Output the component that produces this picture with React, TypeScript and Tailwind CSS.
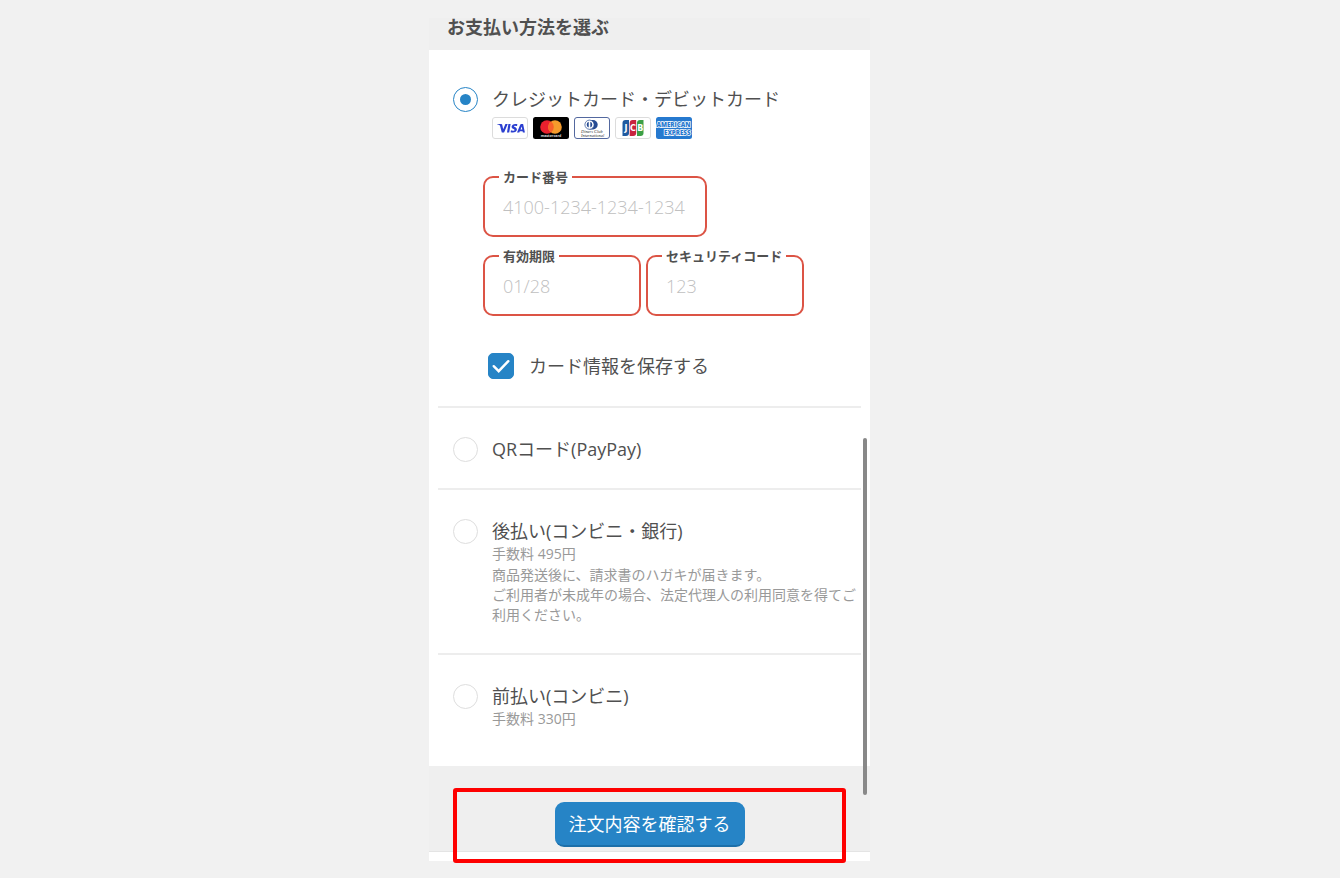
import { useState, type ReactNode } from "react";

const LOGO = "h-[22px] w-9 shrink-0";

function Visa() {
  return (
    <svg viewBox="0 0 36 22" className={LOGO} role="img" aria-label="Visa">
      <rect x="0.5" y="0.5" width="35" height="21" rx="2.5" fill="#fff" stroke="#dcdcdc" />
      <g fill="#2b3fd0">
        <path d="M5 7h4.2c.6 0 1 .3 1.1.9l.9 4.3 2.2-5.2h2.3l-3.6 8.6H9.8l-1.8-6.8C7.9 8.1 6.500 7.500 5 7.200z" />
        <path d="M16.4 7h2.2l-1.4 8.600H15z" />
        <path d="M25.4 7.300l-.4 1.800c-.8-.4-3-.8-3 .2 0 .9 2.900 1 2.900 3.200 0 2.500-3.300 3.700-6.300 2.700l.4-1.900c1.200.6 3.500.7 3.500-.4 0-1-2.900-.9-2.900-3.100 0-2.500 3.200-3.500 5.800-2.500z" />
        <path fillRule="evenodd" d="M29.200 7h1.900l1.800 8.600h-2l-.3-1.300h-2.800l-.5 1.300H25l3.200-7.900c.2-.4.5-.7 1-.7zm.5 2.600l-1.200 3h1.800z" />
      </g>
    </svg>
  );
}

function Mastercard() {
  return (
    <svg viewBox="0 0 36 22" className={LOGO} role="img" aria-label="Mastercard">
      <rect width="36" height="22" rx="2.5" fill="#000" />
      <circle cx="14" cy="10" r="6.8" fill="#e9202e" />
      <circle cx="22" cy="10" r="6.8" fill="#f59b2c" />
      <path d="M18 4.500a6.800 6.800 0 0 1 0 11a6.800 6.800 0 0 1 0-11z" fill="#f8602a" />
      <text x="18" y="20" textAnchor="middle" fontSize="3.6" fontWeight="700" fill="#ddd">
        mastercard
      </text>
    </svg>
  );
}

function Diners() {
  return (
    <svg viewBox="0 0 36 22" className={LOGO} role="img" aria-label="Diners Club">
      <rect x="0.5" y="0.5" width="35" height="21" rx="2.5" fill="#fff" stroke="#53689f" />
      <path d="M15.5 3H19a4.700 4.700 0 0 1 0 9.400h-3.500z" fill="#254a92" />
      <circle cx="15.5" cy="7.700" r="4.600" fill="#fff" stroke="#254a92" strokeWidth="0.700" />
      <path d="M14.700 4.800v5.800a3.100 3.100 0 0 1 0-5.800zM16.300 4.800v5.800a3.100 3.100 0 0 0 0-5.800z" fill="#254a92" />
      <g fontFamily="Liberation Serif, serif" fontStyle="italic" fontSize="4.400" fill="#333">
        <text x="7" y="16.300">Diners Club</text>
        <text x="7" y="19.800">International</text>
      </g>
    </svg>
  );
}

function Jcb() {
  return (
    <svg viewBox="0 0 36 22" className={LOGO} role="img" aria-label="JCB">
      <rect x="0.5" y="0.5" width="35" height="21" rx="2.5" fill="#fff" stroke="#dcdcdc" />
      <path d="M10.500 3H14v13a3 3 0 0 1-3 3H7.500V6a3 3 0 0 1 3-3z" fill="#1f5a9f" />
      <path d="M17.700 3h3.500v13a3 3 0 0 1-3 3h-3.500V6a3 3 0 0 1 3-3z" fill="#c9243f" />
      <path d="M25 3h3.500v13a3 3 0 0 1-3 3H22V6a3 3 0 0 1 3-3z" fill="#3c9f45" />
      <g fontFamily="DejaVu Sans, sans-serif" fontSize="8" fontWeight="700" fill="#fff" textAnchor="middle">
        <text x="11" y="14">J</text>
        <text x="18" y="14">C</text>
        <text x="25.200" y="14">B</text>
      </g>
    </svg>
  );
}

function Amex() {
  return (
    <svg viewBox="0 0 36 22" className={LOGO} role="img" aria-label="American Express">
      <rect width="36" height="22" rx="2.5" fill="#2679cf" />
      <g fontSize="6.200" fontWeight="800" fill="#2679cf" stroke="#fff" strokeWidth="1.400" paintOrder="stroke">
        <text x="0.500" y="10">AMERICAN</text>
        <text x="8" y="17.500">EXPRESS</text>
      </g>
    </svg>
  );
}

interface FieldProps {
  id: string;
  label: string;
  placeholder: string;
  className: string;
}

function Field({ id, label, placeholder, className }: FieldProps) {
  return (
    <fieldset className={`min-w-0 rounded-[10px] border-2 border-[#dc5445] px-3.5 pb-2 ${className}`}>
      <legend className="h-5 px-1 text-[13px] leading-5 font-bold">
        <label htmlFor={id}>{label}</label>
      </legend>
      <input
        id={id}
        type="text"
        inputMode="numeric"
        placeholder={placeholder}
        className="block h-10 w-full bg-transparent pl-1 text-lg font-light outline-none placeholder:text-[#c0c0c0]"
      />
    </fieldset>
  );
}

interface OptionProps {
  id: string;
  title: string;
  selected: string;
  onSelect: (id: string) => void;
  className: string;
  children?: ReactNode;
}

function Option({ id, title, selected, onSelect, className, children }: OptionProps) {
  return (
    <div className={`pr-1 pl-[15px] ${className}`}>
      <div className="flex items-center gap-3.5">
        <input
          id={id}
          type="radio"
          name="payment"
          checked={selected === id}
          onChange={() => onSelect(id)}
          className="grid size-[25px] shrink-0 appearance-none place-items-center rounded-full border border-[#dedede] bg-white checked:border-[#2684c6] checked:before:size-[11px] checked:before:rounded-full checked:before:bg-[#2684c6] checked:before:content-['']"
        />
        <label htmlFor={id} className="text-lg leading-[26px]">
          {title}
        </label>
      </div>
      {children}
    </div>
  );
}

export default function App() {
  const [selected, setSelected] = useState("credit");
  const [save, setSave] = useState(true);

  return (
    <div className="min-h-screen bg-[#f1f1f1] pr-[41px] font-['Open_Sans','Noto_Sans_CJK_JP',sans-serif] text-[#505050]">
      <main className="relative mx-auto max-w-[441px] pt-[18px]">
        <h1 className="bg-[#efefef] pb-3.5 pl-[18px] text-lg leading-[18px] font-bold">
          お支払い方法を選ぶ
        </h1>

        <form onSubmit={(e) => e.preventDefault()}>
          <div className="divide-y-2 divide-[#ededed] bg-white px-[9px]">
            <Option
              id="credit"
              title="クレジットカード・デビットカード"
              selected={selected}
              onSelect={setSelected}
              className="pt-9 pb-[27px]"
            >
              <div className="mt-[5px] flex gap-[5px] pl-[39px]">
                <Visa />
                <Mastercard />
                <Diners />
                <Jcb />
                <Amex />
              </div>
              <div className="mt-7 pl-[30px]">
                <Field id="number" label="カード番号" placeholder="4100-1234-1234-1234" className="max-w-[224px]" />
                <div className="mt-[9px] flex gap-[5px]">
                  <Field id="expiry" label="有効期限" placeholder="01/28" className="w-[158px]" />
                  <Field id="cvc" label="セキュリティコード" placeholder="123" className="w-[158px]" />
                </div>
              </div>
              <label className="mt-[37px] flex items-center gap-[15px] pl-[35px] text-lg leading-[26px]">
                <span className="grid size-[26px] shrink-0">
                  <input
                    type="checkbox"
                    checked={save}
                    onChange={(e) => setSave(e.target.checked)}
                    className="col-start-1 row-start-1 size-[26px] appearance-none rounded-[5px] border border-[#dedede] checked:border-[#2684c6] checked:bg-[#2684c6]"
                  />
                  {save && (
                    <svg
                      viewBox="0 0 26 26"
                      aria-hidden="true"
                      className="pointer-events-none col-start-1 row-start-1 size-[26px] fill-none stroke-white"
                    >
                      <path d="M5.700 13.200l5 5L20.300 8.200" strokeWidth="2.400" strokeLinecap="round" />
                    </svg>
                  )}
                </span>
                カード情報を保存する
              </label>
            </Option>

            <Option
              id="qr"
              title="QRコード(PayPay)"
              selected={selected}
              onSelect={setSelected}
              className="pt-7 pb-[26px]"
            />

            <Option
              id="later"
              title="後払い(コンビニ・銀行)"
              selected={selected}
              onSelect={setSelected}
              className="pt-7 pb-7"
            >
              <div className="pl-[39px] text-sm leading-5 text-[#999]">
                <p>手数料 495円</p>
                <p className="mt-px">
                  商品発送後に、請求書のハガキが届きます。
                  <br />
                  ご利用者が未成年の場合、法定代理人の利用同意を得てご利用ください。
                </p>
              </div>
            </Option>

            <Option
              id="prepaid"
              title="前払い(コンビニ)"
              selected={selected}
              onSelect={setSelected}
              className="pt-7 pb-[37px]"
            >
              <p className="pl-[39px] text-sm leading-5 text-[#999]">手数料 330円</p>
            </Option>
          </div>

          <div className="relative border-b border-[#e4e4e4] bg-[#efefef] pt-9 pb-1 text-center">
            <button
              type="submit"
              className="h-[45px] rounded-[9px] border-b-2 border-[#1c6fa9] bg-[#2684c6] px-3.5 text-lg text-white"
            >
              注文内容を確認する
            </button>
            {/* Highlight around the confirm button */}
            <div className="pointer-events-none absolute top-[22px] right-6 -bottom-3 left-6 z-10 rounded-[3px] border-4 border-[#fe0000]" />
          </div>
          <div className="h-[9px] bg-white" />
        </form>

        {/* Scroll indicator */}
        <div className="absolute top-[438px] right-[3px] h-[357px] w-1 rounded-full bg-[#888]" />
      </main>
    </div>
  );
}
